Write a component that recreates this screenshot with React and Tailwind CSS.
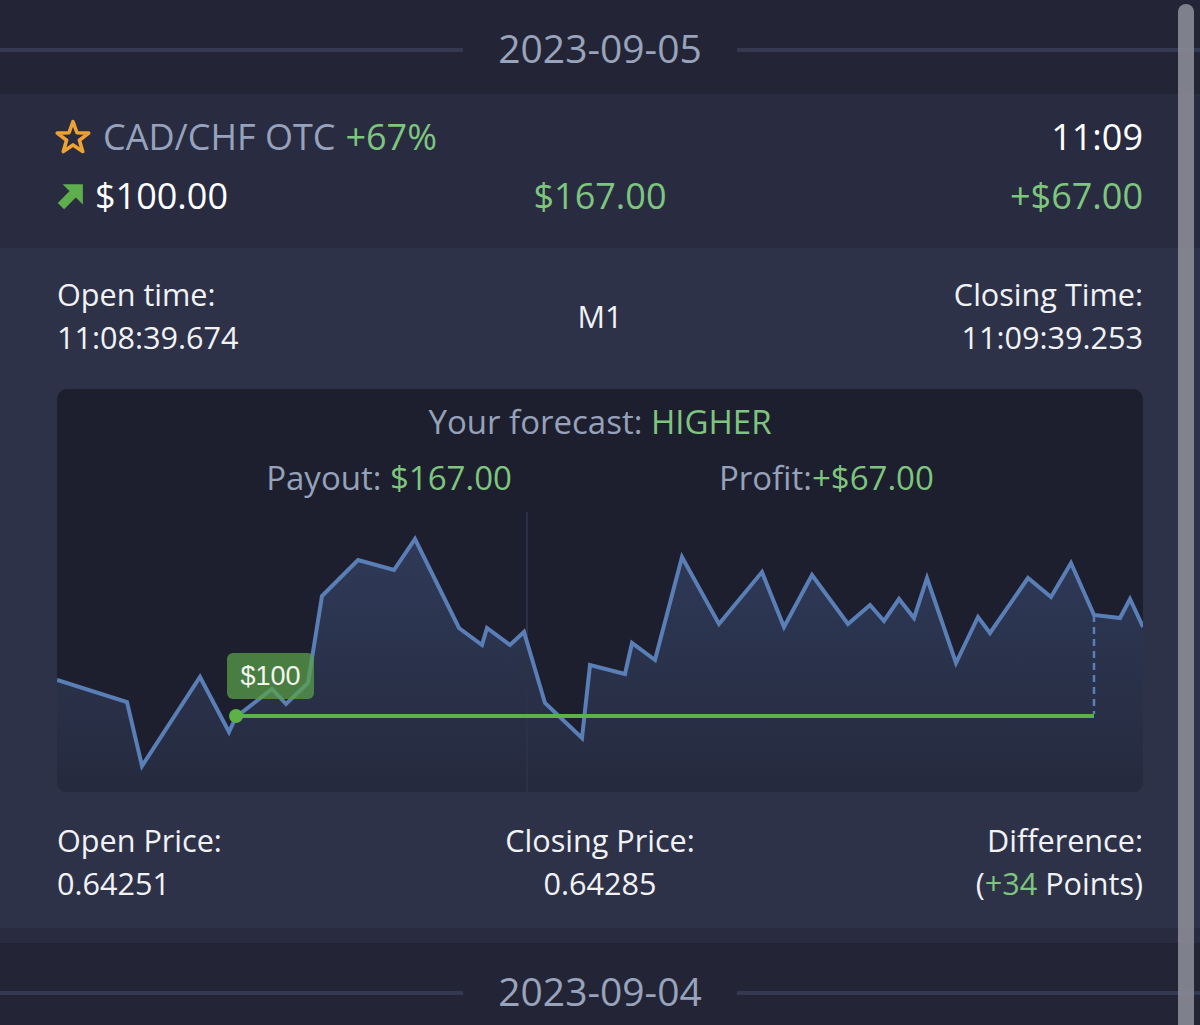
import React from 'react';

const points = [
    [0, 180], [70, 202], [85, 266], [143, 177], [172, 232], [179, 217], [215, 189], [229, 204],
    [251, 183], [265, 96], [301, 60], [337, 70], [358, 39], [402, 128], [425, 145], [430, 128],
    [453, 145], [467, 132], [488, 203], [525, 238], [533, 165], [568, 174], [575, 143], [598, 160],
    [625, 57], [662, 124], [705, 72], [727, 127], [755, 75], [791, 124], [813, 105], [827, 121],
    [842, 99], [857, 118], [870, 78], [899, 163], [921, 117], [933, 133], [971, 78], [994, 97],
    [1014, 63], [1037, 115], [1063, 118], [1073, 99], [1086, 127]
];

const DateRow = ({ date }) => (
    <div className="h-[94px] flex items-center gap-[35px]">
        <div className="flex-1 h-[4px] bg-[#343850] mt-[5px]"></div>
        <span className="text-[39px] leading-none text-[#98a3bc]">{date}</span>
        <div className="flex-1 h-[4px] bg-[#343850] mt-[5px]"></div>
    </div>
);

const StarIcon = () => (
    <svg width="36" height="36" viewBox="0 0 24 24" fill="none">
        <polygon
            points="12,1.8 14.65,9.16 22.46,9.4 16.28,14.19 18.47,21.7 12,17.3 5.53,21.7 7.72,14.19 1.54,9.4 9.35,9.16"
            stroke="#eea232"
            strokeWidth="2.4"
            strokeLinejoin="round"
        />
    </svg>
);

const UpArrow = () => (
    <svg width="27" height="27" viewBox="0 0 24 24">
        <polygon points="5,1 23,1 23,19" fill="#5fae4e" />
        <line x1="3.5" y1="20.5" x2="15" y2="9" stroke="#5fae4e" strokeWidth="8" />
    </svg>
);

const Chart = () => {
    const line = points.map(p => p.join(',')).join(' ');
    const area = `${line} 1086,292 0,292`;
    return (
        <svg width="1086" height="292" viewBox="0 0 1086 292" className="block">
            <defs>
                <linearGradient id="fill" x1="0" y1="0" x2="0" y2="1">
                    <stop offset="0%" stopColor="#2f3a58" />
                    <stop offset="100%" stopColor="#252a3e" />
                </linearGradient>
            </defs>
            <polygon points={area} fill="url(#fill)" />
            <line x1="470" y1="12" x2="470" y2="292" stroke="#2d3146" strokeWidth="2" />
            <polyline points={line} fill="none" stroke="#5a7eb6" strokeWidth="4" strokeLinejoin="miter" />
            <line x1="1037" y1="115" x2="1037" y2="214" stroke="#5a7eb6" strokeWidth="2.5" strokeDasharray="7 5" />
            <line x1="179" y1="216" x2="1037" y2="216" stroke="#5cb247" strokeWidth="4" />
            <circle cx="179" cy="216" r="7" fill="#5cb247" />
            <rect x="170" y="153" width="87" height="46" rx="6" fill="#5aa24a" fillOpacity="0.72" />
            <text x="213.5" y="185" textAnchor="middle" fill="#f2f6ee" fontSize="27" fontFamily="'Liberation Sans', Arial, sans-serif">$100</text>
        </svg>
    );
};

const App = () => {
    return (
        <div className="relative min-h-[1025px] bg-[#232536] font-['Open_Sans',sans-serif] overflow-hidden">
            <DateRow date="2023-09-05" />

            {/* Trade header */}
            <div className="bg-[#292c41] px-[57px] pt-[19px] pb-[28px] text-[36px] leading-[48px]">
                <div className="flex items-center justify-between">
                    <div className="flex items-center">
                        <span className="-ml-[2px] mr-[12px]"><StarIcon /></span>
                        <span className="text-[#97a2bc]">CAD/CHF OTC</span>
                        <span className="text-[#7ec67d] ml-[10px]">+67%</span>
                    </div>
                    <span className="text-white">11:09</span>
                </div>
                <div className="grid grid-cols-3 items-center mt-[11px]">
                    <div className="flex items-center">
                        <span className="mr-[11px]"><UpArrow /></span>
                        <span className="text-white">$100.00</span>
                    </div>
                    <span className="text-center text-[#7ec67d]">$167.00</span>
                    <span className="text-right text-[#7ec67d]">+$67.00</span>
                </div>
            </div>

            {/* Trade details */}
            <div className="bg-[#2e3248] px-[57px] pt-[25px] pb-[23px] text-[30.6px] leading-[43px] text-[#f1f2f5]">
                <div className="grid grid-cols-3 items-center">
                    <div>
                        <p>Open time:</p>
                        <p>11:08:39.674</p>
                    </div>
                    <p className="text-center">M1</p>
                    <div className="text-right">
                        <p>Closing Time:</p>
                        <p>11:09:39.253</p>
                    </div>
                </div>

                <div className="mt-[30px] h-[403px] rounded-[10px] bg-[#1d1f2e] overflow-hidden">
                    <div className="pt-[11px] text-[33px] leading-[44px] text-[#96a1ba]">
                        <p className="text-center">
                            Your forecast: <span className="text-[#7ec67d]">HIGHER</span>
                        </p>
                        <div className="flex justify-center gap-[207px] mt-[12px]">
                            <p>Payout: <span className="text-[#7ec67d]">$167.00</span></p>
                            <p>Profit:<span className="text-[#7ec67d]">+$67.00</span></p>
                        </div>
                    </div>
                    <Chart />
                </div>

                <div className="grid grid-cols-3 mt-[27px]">
                    <div>
                        <p>Open Price:</p>
                        <p>0.64251</p>
                    </div>
                    <div className="text-center">
                        <p>Closing Price:</p>
                        <p>0.64285</p>
                    </div>
                    <div className="text-right">
                        <p>Difference:</p>
                        <p>(<span className="text-[#7ec67d]">+34</span> Points)</p>
                    </div>
                </div>
            </div>
            <div className="h-[15px] bg-[#292c40]"></div>

            <DateRow date="2023-09-04" />

            {/* Scrollbar overlay */}
            <div className="absolute top-[4px] right-[6px] w-[16px] h-[1100px] rounded-full bg-[#8a8b96]/90"></div>
        </div>
    );
};

export default App;
